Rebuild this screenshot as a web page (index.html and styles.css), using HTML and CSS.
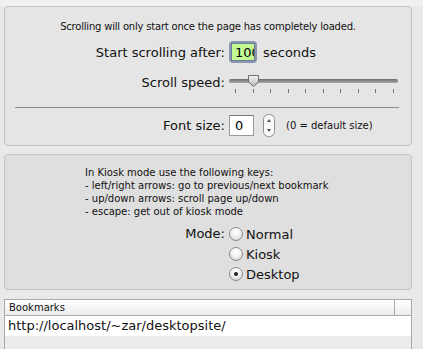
FILE: index.html
```html
<!DOCTYPE html>
<html lang="en">
  <head>
    <meta charset="UTF-8" />
    <title>Scrolling Preferences</title>
    <link rel="stylesheet" href="styles.css">
  </head>
  <body>
    <div class="sheet">
      <section class="pref-box box-scroll">
        <p class="pref-note">Scrolling will only start once the page has completely loaded.</p>

        <div class="pref-row row-delay">
          <label class="pref-label" for="inputDelay">Start scrolling after:</label>
          <span class="focus-ring"><input id="inputDelay" class="field field-delay" type="text" value="100" /></span>
          <span class="pref-unit">seconds</span>
        </div>

        <div class="pref-row row-speed">
          <span class="pref-label">Scroll speed:</span>
          <div class="slider">
            <div class="slider-track"></div>
            <svg class="slider-thumb" width="13" height="14" viewBox="0 0 13 14">
              <defs>
                <linearGradient id="thumbFill" x1="0" y1="0" x2="0" y2="1">
                  <stop offset="0" stop-color="#f4f4f4" />
                  <stop offset="1" stop-color="#b4b4b4" />
                </linearGradient>
              </defs>
              <path d="M1.5 1.5 H11.5 V8 L6.5 12.5 L1.5 8 Z" fill="url(#thumbFill)" stroke="#6f6f6f" stroke-width="1" />
            </svg>
            <div class="slider-ticks">
              <i></i><i></i><i></i><i></i><i></i><i></i><i></i><i></i><i></i><i></i>
            </div>
          </div>
        </div>

        <hr class="pref-rule" />

        <div class="pref-row row-font">
          <label class="pref-label" for="inputFont">Font size:</label>
          <input id="inputFont" class="field field-font" type="text" value="0" />
          <span class="stepper">
            <svg width="12" height="23" viewBox="0 0 12 23">
              <rect x="0.5" y="0.5" width="11" height="22" rx="5" fill="#fbfbfb" stroke="#8c8c8c" />
              <path d="M4 8 L6 5 L8 8 Z" fill="#555" />
              <path d="M4 15 L6 18 L8 15 Z" fill="#555" />
            </svg>
          </span>
          <span class="pref-hint">(0 = default size)</span>
        </div>
      </section>

      <section class="pref-box box-kiosk">
        <div class="kiosk-keys">
          <div>In Kiosk mode use the following keys:</div>
          <div>- left/right arrows: go to previous/next bookmark</div>
          <div>- up/down arrows: scroll page up/down</div>
          <div>- escape: get out of kiosk mode</div>
        </div>

        <div class="mode-grid">
          <span class="pref-label">Mode:</span>
          <div class="mode-options">
            <label class="radio"><span class="radio-dot"></span>Normal</label>
            <label class="radio"><span class="radio-dot"></span>Kiosk</label>
            <label class="radio"><span class="radio-dot is-checked"></span>Desktop</label>
          </div>
        </div>
      </section>

      <div class="bookmarks">
        <div class="bookmarks-head">
          <span class="head-cell">Bookmarks</span>
          <span class="head-end"></span>
        </div>
        <div class="bookmarks-row">http://localhost/~zar/desktopsite/</div>
      </div>
    </div>
  </body>
</html>
```

FILE: styles.css
```css
/* Page */
body {
  margin: 0;
  font-family: "DejaVu Sans", "Liberation Sans", sans-serif;
  color: #111;
  background: linear-gradient(#f1f1f1 0, #f1f1f1 6px, #e9e9e9 6px);
  height: 349px;
  overflow: hidden;
}

.sheet {
  padding: 6px 11px 0 4px;
}

/* Grouped boxes */
.pref-box {
  border: 1px solid #c3c3c3;
  border-radius: 4px;
  box-sizing: border-box;
}

.box-scroll {
  height: 140px;
  background: #e5e5e5;
  padding-top: 13px;
}

.box-kiosk {
  height: 136px;
  margin-top: 8px;
  background: #dfdfdf;
  padding-top: 11px;
}

.pref-note {
  margin: 0;
  text-align: center;
  font-size: 10px;
  letter-spacing: -0.2px;
  line-height: 13px;
}

.pref-row {
  display: flex;
  align-items: center;
}

.pref-label {
  width: 220px;
  flex: none;
  text-align: right;
  font-size: 13px;
  margin-right: 4px;
}

.row-delay {
  margin-top: 8px;
  height: 22px;
}

.focus-ring {
  display: block;
  padding: 2px;
  border-radius: 4px;
  background: #8797b0;
}

.field {
  display: block;
  box-sizing: border-box;
  border: 1px solid #9a9a9a;
  border-top-color: #7a7a7a;
  font-family: inherit;
  font-size: 13px;
  padding: 0 0 0 3px;
  margin: 0;
  outline: none;
}

.field-delay {
  width: 24px;
  height: 18px;
  background: #c2f993;
  border-color: #6d7d96;
}

.pref-unit {
  margin-left: 6px;
  font-size: 13px;
}

/* Slider */
.row-speed {
  margin-top: 7px;
  height: 30px;
  align-items: flex-start;
}

.row-speed .pref-label {
  margin-top: 5px;
}

.slider {
  position: relative;
  width: 169px;
  height: 30px;
}

.slider-track {
  position: absolute;
  left: 0;
  right: 0;
  top: 9px;
  height: 4px;
  border-radius: 2px;
  background: linear-gradient(#6c6c6c, #a8a8a8);
}

.slider-thumb {
  position: absolute;
  left: 18px;
  top: 4px;
}

.slider-ticks {
  position: absolute;
  left: 6px;
  right: 4px;
  top: 19px;
  display: flex;
  justify-content: space-between;
}

.slider-ticks i {
  display: block;
  width: 1px;
  height: 4px;
  background: #777;
}

.pref-rule {
  margin: 7px 12px 0 10px;
  border: 0;
  border-top: 1px solid #8e8e8e;
  height: 0;
}

.row-font {
  margin-top: 5px;
  height: 24px;
}

.field-font {
  width: 25px;
  height: 21px;
  background: #fff;
  line-height: 19px;
  padding-left: 5px;
}

.stepper {
  display: block;
  margin-left: 9px;
  height: 23px;
}

.stepper svg {
  display: block;
}

.pref-hint {
  margin-left: 11px;
  font-size: 10px;
}

/* Kiosk box */
.kiosk-keys {
  padding-left: 80px;
  font-size: 10px;
  line-height: 13px;
}

.mode-grid {
  display: flex;
  margin-top: 6px;
}

.mode-grid .pref-label {
  line-height: 20px;
}

.mode-options {
  display: flex;
  flex-direction: column;
}

.radio {
  display: flex;
  align-items: center;
  height: 20px;
  font-size: 13px;
}

.radio-dot {
  width: 14px;
  height: 14px;
  margin-right: 3px;
  border-radius: 50%;
  border: 1px solid #8a8a8a;
  background: radial-gradient(circle at 50% 35%, #ffffff 0, #f2f2f2 45%, #c9c9c9 100%);
  box-sizing: border-box;
  display: flex;
  align-items: center;
  justify-content: center;
}

.radio-dot.is-checked::after {
  content: "";
  width: 4px;
  height: 4px;
  border-radius: 50%;
  background: #222;
}

/* Bookmarks table */
.bookmarks {
  margin-top: 9px;
  height: 60px;
  border: 1px solid #a9a9a9;
  border-bottom: 0;
  background: #ececec;
}

.bookmarks-head {
  display: flex;
  height: 15px;
  border-bottom: 1px solid #a9a9a9;
  background: linear-gradient(#ffffff, #ececec);
}

.head-cell {
  flex: 1;
  font-size: 10px;
  line-height: 15px;
  padding-left: 4px;
  border-right: 1px solid #a9a9a9;
}

.head-end {
  width: 16px;
}

.bookmarks-row {
  height: 20px;
  background: #fff;
  font-size: 13px;
  line-height: 20px;
  padding-left: 3px;
}
```
